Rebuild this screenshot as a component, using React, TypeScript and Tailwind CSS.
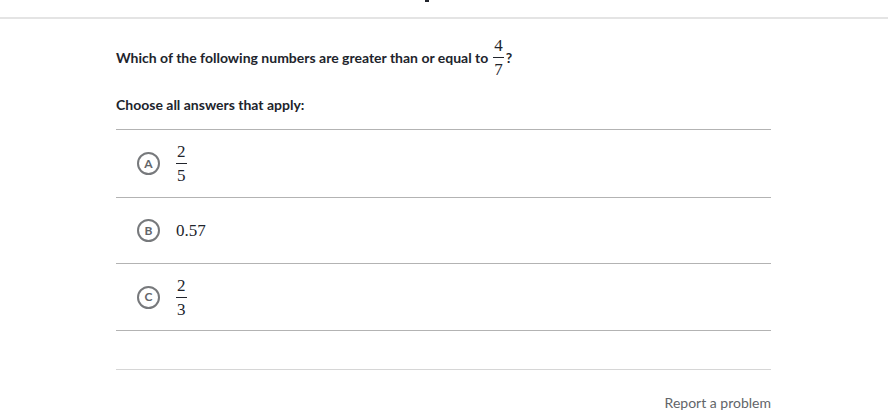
import React from "react"

const serif = "font-[family-name:Liberation_Serif,DejaVu_Serif,serif]"

function Frac({ n, d }: { n: string; d: string }) {
  return (
    <span className={`inline-flex flex-col items-center align-middle ${serif} text-[17px] font-normal leading-none`}>
      <span className="px-[1px] pb-[3px]">{n}</span>
      <span className="h-[1px] w-full bg-[#21242c]" />
      <span className="px-[1px] pt-[3px]">{d}</span>
    </span>
  )
}

function Choice({ letter, children, h }: { letter: string; children: React.ReactNode; h: string }) {
  return (
    <div className={`flex items-center border-b border-[#b3b3b3] ${h}`}>
      <div className="ml-[21px] flex h-[23px] w-[23px] items-center justify-center rounded-full border-2 border-[#77797c] text-[12px] font-bold leading-none text-[#626569]">
        {letter}
      </div>
      <div className="ml-[16px] text-[#21242c]">{children}</div>
    </div>
  )
}

export default function App() {
  return (
    <div className="relative h-[417px] w-[888px] overflow-hidden bg-white font-[family-name:Lato,Open_Sans,sans-serif] text-[#21242c]">
      {/* cut-off glyph at top */}
      <div className="absolute left-[425px] top-0 h-[2px] w-[4px] bg-[#21242c]" />

      <div className="h-[19px] border-b-2 border-[#e4e4e4]" />

      <div className="ml-[116px] w-[655px]">
        {/* Question */}
        <div className="mt-[18px] flex items-center text-[14px] font-bold">
          <span>Which of the following numbers are greater than or equal to</span>
          <span className="ml-[5px]">
            <Frac n="4" d="7" />
          </span>
          <span className="ml-[2px]">?</span>
        </div>

        <div className="mt-[16px] text-[14px] font-bold">Choose all answers that apply:</div>

        <div className="mt-[14px] border-t border-[#b3b3b3]">
          <Choice letter="A" h="h-[68px]">
            <Frac n="2" d="5" />
          </Choice>
          <Choice letter="B" h="h-[66px]">
            <span className={`${serif} text-[17px]`}>0.57</span>
          </Choice>
          <Choice letter="C" h="h-[67px]">
            <Frac n="2" d="3" />
          </Choice>
        </div>

        <div className="mt-[38px] border-t border-[#d6d6d6]" />

        <div className="mt-[22px] text-right text-[14px] text-[#626569]">Report a problem</div>
      </div>
    </div>
  )
}
